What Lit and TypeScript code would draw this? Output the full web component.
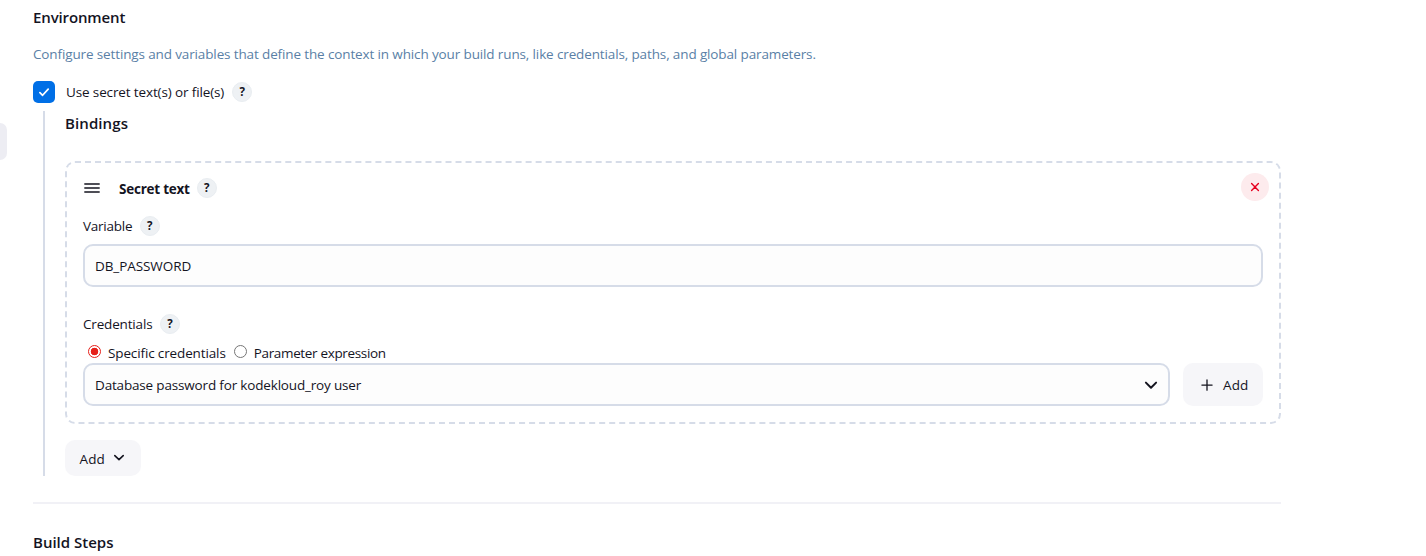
import { LitElement, html, css, svg } from "lit";
import { customElement, property } from "lit/decorators.js";

@customElement("help-badge")
class HelpBadge extends LitElement {
  static styles = css`
    :host {
      display: flex;
      width: 20px;
      height: 20px;
      box-sizing: border-box;
      flex: none;
      align-items: center;
      justify-content: center;
      border-radius: 50%;
      background: #eef1f4;
      border: 1px solid #e9edf1;
      color: #14141f;
      font: 700 11.5px/18px "Open Sans", "Noto Sans", sans-serif;
    }
  `;
  render() {
    return html`?`;
  }
}

const ICONS: Record<string, unknown> = {
  check: svg`<path d="M6.9 11.7l2.7 2.6 5.6-6.2" stroke-width="1.7" />`,
  close: svg`<path d="M7.6 7.6l6.8 6.8M14.4 7.6l-6.8 6.8" stroke-width="1.4" />`,
  plus: svg`<path d="M11 6v10.2M5.9 11.1h10.2" stroke-width="1.3" />`,
  chevron: svg`<path d="M5.9 8.6l5.1 5.1 5.1-5.1" stroke-width="2" />`,
  chevronSmall: svg`<path d="M6.8 8.6l4.2 4 4.2-4" stroke-width="1.6" />`,
  grip: svg`<path d="M3.8 7h14.4M3.8 11h14.4M3.8 15h14.4" stroke-width="1.4" />`,
};

@customElement("ui-icon")
class UiIcon extends LitElement {
  @property() name = "";
  static styles = css`
    :host {
      display: block;
      width: 22px;
      height: 22px;
      flex: none;
    }
    svg {
      display: block;
      fill: none;
      stroke: currentColor;
      stroke-linecap: round;
      stroke-linejoin: round;
    }
  `;
  render() {
    return html`<svg width="22" height="22" viewBox="0 0 22 22">${ICONS[this.name]}</svg>`;
  }
}

@customElement("app-root")
class AppRoot extends LitElement {
  static styles = css`
    :host {
      display: flex;
      height: 556px;
      overflow: hidden;
      background: #fff;
      color: #14141f;
      font: 400 13.5px/20px "Open Sans", "Noto Sans", sans-serif;
      white-space: nowrap;
    }
    .side {
      width: 7px;
      height: 37px;
      margin-top: 123px;
      border-radius: 0 8px 8px 0;
      background: #ededf3;
    }
    main {
      width: 1248px;
      margin-left: 26px;
    }
    .title {
      font-size: 15px;
      font-weight: 600;
      line-height: 22px;
      padding-top: 6px;
    }
    .desc {
      color: #5a7fa6;
      margin-top: 16px;
    }
    .row {
      display: flex;
      align-items: center;
    }
    .option {
      height: 22px;
      margin-top: 17px;
    }
    .checkbox {
      width: 22px;
      height: 22px;
      border-radius: 5px;
      background: #006fe6;
      color: #fff;
      margin-right: 11px;
    }
    .option help-badge {
      margin-left: 8px;
    }
    .group {
      margin: 8px 0 0 10px;
      border-left: 2px solid #d6dce8;
      padding-left: 20px;
      height: 365px;
    }
    .bindings {
      font-size: 15px;
      font-weight: 600;
      line-height: 22px;
      padding-top: 1px;
    }
    .card {
      box-sizing: border-box;
      height: 263px;
      margin-top: 27px;
      border: 2px dashed #d6dce8;
      border-radius: 10px;
      padding: 10px 16px 0;
    }
    .head {
      height: 28px;
    }
    .grip {
      margin: 2px 16px 0 -2px;
    }
    .head strong {
      font-weight: 700;
      padding-top: 4px;
    }
    .head help-badge {
      margin: 2px 0 0 7px;
    }
    .remove {
      width: 28px;
      height: 28px;
      border-radius: 50%;
      background: #fdebed;
      color: #e6001f;
      justify-content: center;
      margin: 0 -6px 0 auto;
    }
    .label {
      height: 20px;
    }
    .variable {
      margin-top: 15px;
    }
    .label help-badge {
      margin-left: 7.5px;
    }
    .field {
      box-sizing: border-box;
      height: 43px;
      border: 2px solid #d6dce8;
      border-radius: 10px;
      background: #fdfdfd;
      padding: 0 10px;
    }
    .input {
      margin-top: 8px;
    }
    .credentials {
      margin-top: 27px;
    }
    .radios {
      height: 20px;
      margin-top: 9px;
      padding-left: 5px;
    }
    .radio {
      box-sizing: border-box;
      width: 13px;
      height: 13px;
      margin: 0 7px 3px 0;
      border: 1px solid #767676;
      border-radius: 50%;
    }
    .radio.on {
      border-color: #e6201a;
      background: radial-gradient(circle, #e6201a 3.5px, #fff 4.1px);
    }
    .radios .radio:nth-of-type(3) {
      margin-left: 8px;
    }
    .select {
      flex: 1;
      justify-content: space-between;
      padding-right: 6px;
    }
    .button {
      box-sizing: border-box;
      background: #f6f6f9;
      border-radius: 10px;
    }
    .add-cred {
      width: 80px;
      height: 43px;
      margin-left: 13px;
      padding-left: 13px;
      gap: 5px;
    }
    .add {
      width: 76px;
      height: 36px;
      margin-top: 16px;
      padding-left: 14.5px;
      gap: 3px;
    }
    .add .t-add {
      padding-top: 2px;
    }
    .rule {
      height: 2px;
      margin-top: 26px;
      background: #f1f1f6;
    }
    .steps {
      padding-top: 27px;
    }
    .t-env { letter-spacing: -0.13px; }
    .t-bind { letter-spacing: 0.1px; }
    .t-desc, .t-use, .t-spec { letter-spacing: -0.13px; }
    .t-secret, .t-var { letter-spacing: -0.24px; }
    .t-db { letter-spacing: -0.08px; }
    .t-cred, .t-sel { letter-spacing: -0.17px; }
    .t-param { letter-spacing: -0.34px; }
    .t-add { letter-spacing: 0.1px; }
  `;
  render() {
    return html`
      <div class="side"></div>
      <main>
        <div class="title"><span class="t-env">Environment</span></div>
        <div class="desc"><span class="t-desc">Configure settings and variables that define the context in which your build runs, like credentials, paths, and global parameters.</span></div>
        <div class="row option">
          <div class="checkbox"><ui-icon name="check"></ui-icon></div>
          <span class="t-use">Use secret text(s) or file(s)</span>
          <help-badge></help-badge>
        </div>
        <section class="group">
          <div class="bindings"><span class="t-bind">Bindings</span></div>
          <div class="card">
            <div class="row head">
              <ui-icon class="grip" name="grip"></ui-icon>
              <strong class="t-secret">Secret text</strong>
              <help-badge></help-badge>
              <div class="row remove"><ui-icon name="close"></ui-icon></div>
            </div>
            <div class="row label variable"><span class="t-var">Variable</span><help-badge></help-badge></div>
            <div class="row field input"><span class="t-db">DB_PASSWORD</span></div>
            <div class="row label credentials"><span class="t-cred">Credentials</span><help-badge></help-badge></div>
            <div class="row radios">
              <span class="radio on"></span><span class="t-spec">Specific credentials</span>
              <span class="radio"></span><span class="t-param">Parameter expression</span>
            </div>
            <div class="row">
              <div class="row field select">
                <span class="t-sel">Database password for kodekloud_roy user</span>
                <ui-icon name="chevron"></ui-icon>
              </div>
              <div class="row button add-cred"><ui-icon name="plus"></ui-icon><span class="t-add">Add</span></div>
            </div>
          </div>
          <div class="row button add"><span class="t-add">Add</span><ui-icon name="chevronSmall"></ui-icon></div>
        </section>
        <div class="rule"></div>
        <div class="title steps"><span class="t-steps">Build Steps</span></div>
      </main>
    `;
  }
}
